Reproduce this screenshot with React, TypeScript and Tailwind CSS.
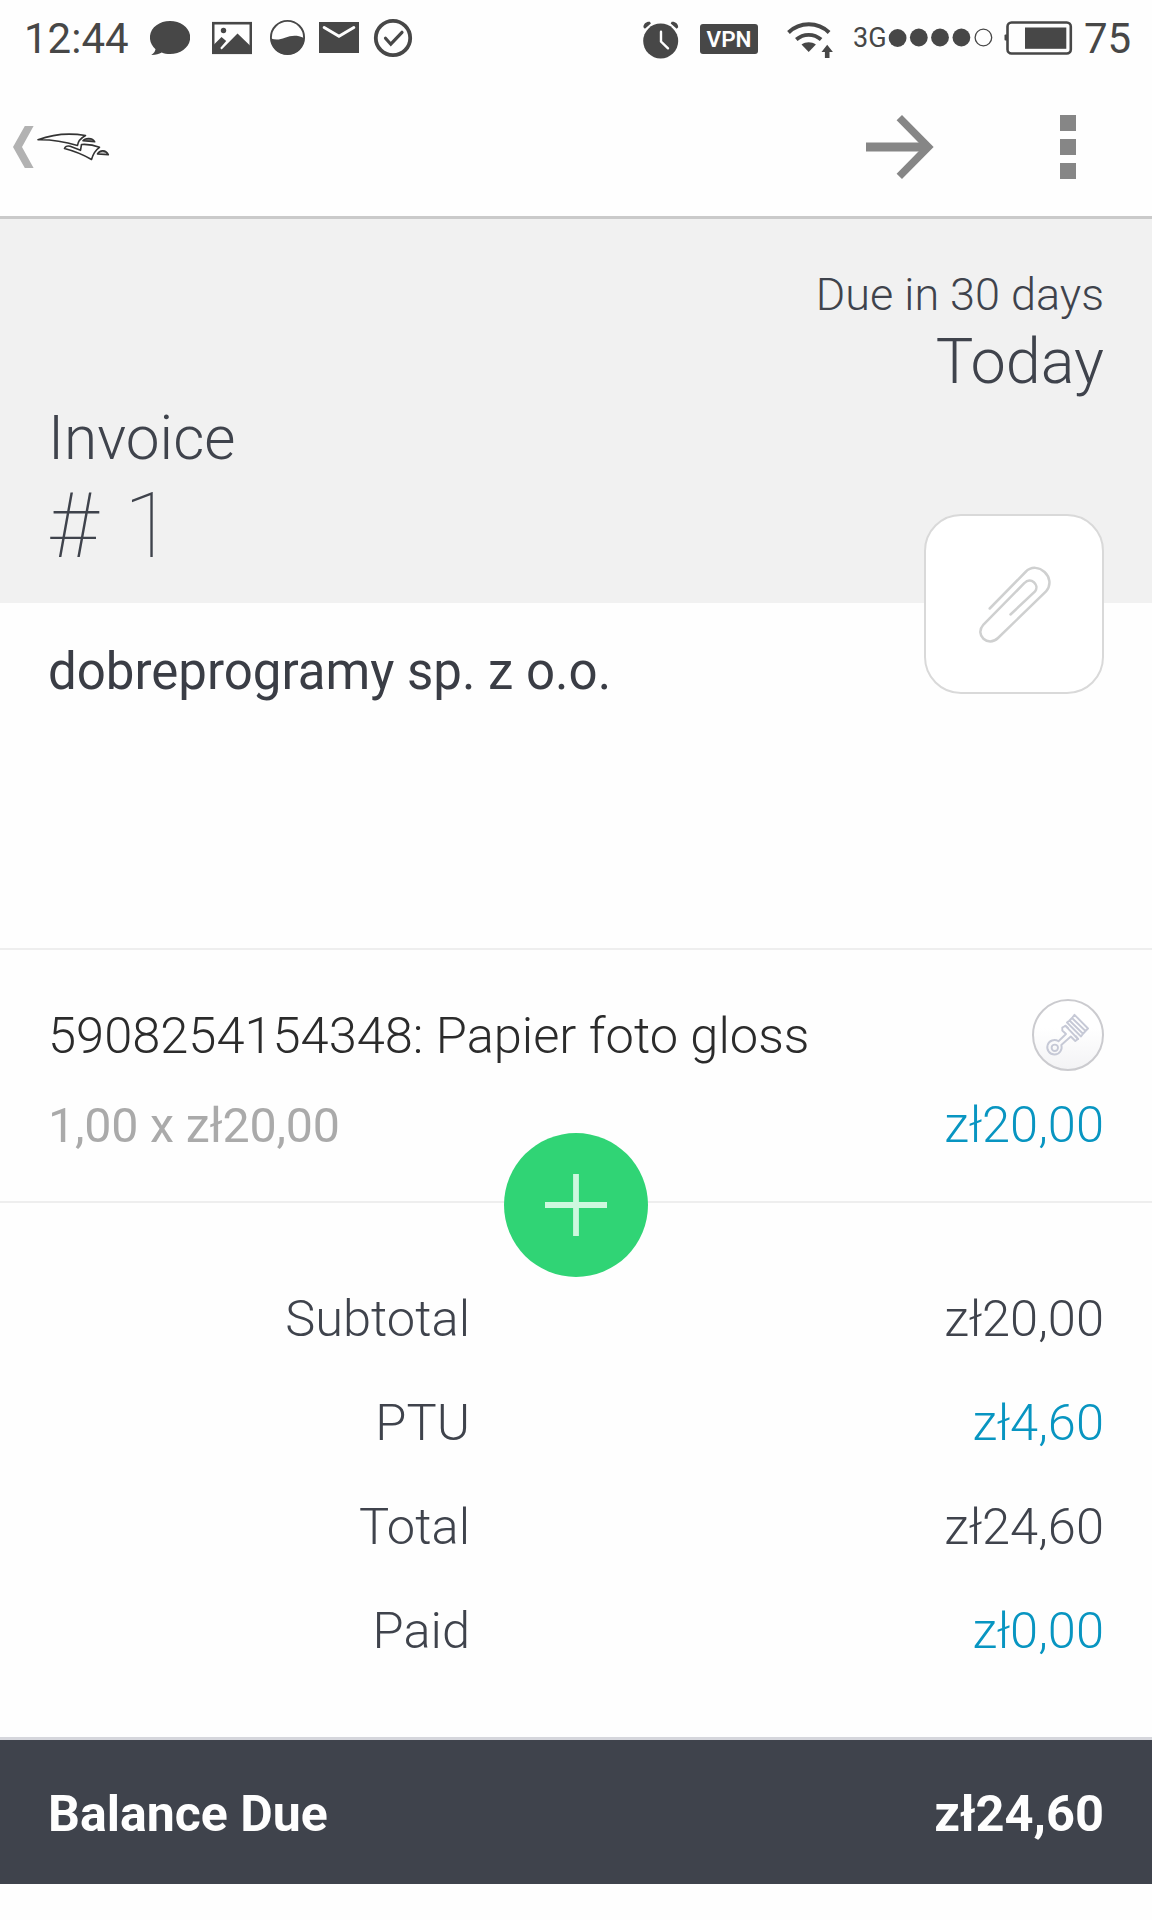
import type { ReactNode } from 'react';

const INK = '#474747';

type GlyphProps = { x: number; y?: number; w: number; h?: number; className?: string; children: ReactNode };

function Glyph({ x, y = 0, w, h = 76, className = '', children }: GlyphProps) {
  return (
    <svg width={w} height={h} viewBox={`${x} ${y} ${w} ${h}`} fill="none" className={`block shrink-0 ${className}`}>
      {children}
    </svg>
  );
}

function StatusBar() {
  return (
    <div className="flex h-[76px] items-center justify-between pl-[24px] pr-[19px] text-[#474747]">
      <div className="flex items-center">
        <span className="mt-[2px] w-[126px] text-[42px] leading-[76px]">12:44</span>
        <Glyph x={150} w={40}>
          <path d="M170 21c11.2 0 20.2 7.2 20.2 16.3S181.200 54 170 54c-3 0-5.800-.5-8.300-1.500-2.800 1.700-6.200 2.500-10.400 2.400 2.300-1.500 3.800-3.400 4.200-5.700-3.500-3-5.600-7.200-5.600-11.900C149.900 28.200 158.900 21 170 21z" fill={INK} />
        </Glyph>
        <Glyph x={212} w={40} className="ml-[22px]">
          <rect x="213.200" y="23.200" width="37.600" height="29.600" stroke={INK} strokeWidth="2.600" />
          <circle cx="223.500" cy="30.500" r="2.700" fill={INK} />
          <path d="M213 45.500l8.500-8.500 4.700 4-6 7 1.500 1.500L237.500 33.500 251 46.500V53H213z" fill={INK} />
        </Glyph>
        <Glyph x={269} w={37} className="ml-[17px]">
          <circle cx="287.500" cy="37.500" r="16.600" stroke={INK} strokeWidth="1.900" />
          <path d="M271 38.500c4.500 1.800 9 1.300 14-.7 6-2.200 11.500-3.200 19 .2 0 9.500-7 16.500-16.500 16.500S271 47.500 271 38.500z" fill={INK} />
        </Glyph>
        <Glyph x={319} w={40} className="ml-[13px]">
          <rect x="319" y="22" width="40" height="31" fill={INK} />
          <path d="M324.200 27.500L339 36.300l14.800-8.800" stroke="#fefefe" strokeWidth="3" strokeLinecap="round" />
        </Glyph>
        <Glyph x={373} w={40} className="ml-[14px]">
          <circle cx="393" cy="38" r="17.200" stroke={INK} strokeWidth="3.800" />
          <path d="M385.500 38.200l5.300 6L402 32.300" stroke={INK} strokeWidth="3.200" strokeLinecap="round" />
        </Glyph>
      </div>
      <div className="flex items-center">
        <Glyph x={643} w={36}>
          <circle cx="660.700" cy="41" r="17.500" fill={INK} />
          <path d="M643.400 27.300c0-3.600 2.800-6 6.500-5.600l1 1.800-6 5.300zM678.200 27.300c0-3.600-2.800-6-6.500-5.600l-1 1.800 6 5.300z" fill={INK} />
          <path d="M661 31.800v9.700l7 6.800" stroke="#fefefe" strokeWidth="2.400" strokeLinecap="round" />
        </Glyph>
        <div className="ml-[21px] mt-[2px] flex h-[30px] w-[58px] items-center justify-center rounded-[3px] bg-[#474747] text-[22.5px] font-semibold leading-[30px] text-[#fefefe]">
          VPN
        </div>
        <Glyph x={787} w={46} className="ml-[29px]">
          <path d="M788.500 32.500c11.400-10.900 29.200-10.900 40.600 0" stroke={INK} strokeWidth="4" />
          <path d="M796.300 39.500c7.100-6.300 17.600-6.300 24.800 0" stroke={INK} strokeWidth="3.800" />
          <path d="M801.500 44.500c4.300-3 10-3 14.400 0L808.700 52z" fill={INK} />
          <path d="M827.200 44.800l5.700 7.200h-3.400v6h-4.600v-6h-3.400z" fill={INK} />
        </Glyph>
        <span className="ml-[20px] w-[35px] text-[27px] leading-[76px]">3G</span>
        <Glyph x={888} w={105}>
          <circle cx="897.600" cy="38" r="8.900" fill={INK} />
          <circle cx="918.800" cy="37.500" r="8.900" fill={INK} />
          <circle cx="940" cy="37.500" r="8.900" fill={INK} />
          <circle cx="961.400" cy="37.500" r="8.900" fill={INK} />
          <circle cx="983.400" cy="37.500" r="8.300" stroke={INK} strokeWidth="1.300" />
        </Glyph>
        <Glyph x={1004} w={69} className="ml-[11px]">
          <rect x="1007.500" y="22.500" width="63.300" height="31" rx="4" stroke={INK} strokeWidth="2.600" />
          <rect x="1025" y="27.500" width="41.300" height="21.300" fill={INK} />
          <path d="M1007 34.500h-1.500q-1 0-1 1v4q0 1 1 1h1.500z" fill={INK} />
        </Glyph>
        <span className="ml-[11px] mt-[2px] w-[49px] text-[42px] leading-[76px]">75</span>
      </div>
    </div>
  );
}

function Toolbar() {
  return (
    <div className="flex h-[143px] items-start justify-between border-b-[3px] border-[#cacaca] pl-[12px] pr-[76px]">
      <Glyph x={12} y={76} w={100} h={140}>
        <path d="M24.800 126h8.800L22 147l11.600 21h-8.800L13 147z" fill="#b2b2b2" />
        <g stroke="#333" strokeWidth="1.600" strokeLinejoin="round">
          <path d="M38 139.800C52 134.500 68 132.500 85.500 135.500c-4.500 2.500-7.500 5.500-8 10C64 141.500 52 139.500 38 139.800z" />
          <path d="M65 147.500c1-1.500 3-1.700 5.200-1.200l10.300 4L81.500 144.500c6.500-.4 12.500.6 18 2.800-4 2.700-6.500 6.700-8 12.200C83 154.500 73.500 150.800 64.500 148.500z" />
          <path d="M83 140.800c2-3 9.500-3.500 11.700 1z" fill="#777" />
          <path d="M97.500 154c2.500-4.500 8.500-4 10.800.7z" fill="#bbb" />
        </g>
      </Glyph>
      <div className="flex">
        <Glyph x={866} y={76} w={69} h={140}>
          <path d="M866 147h60" stroke="#868686" strokeWidth="9" />
          <path d="M899.300 117.700L928.300 147 899.300 176.300" stroke="#868686" strokeWidth="7.600" />
        </Glyph>
        <div className="ml-[125px] flex h-[140px] flex-col gap-[8px] pt-[39px]">
          <div className="size-4 bg-[#868686]" />
          <div className="size-4 bg-[#868686]" />
          <div className="size-4 bg-[#868686]" />
        </div>
      </div>
    </div>
  );
}

function AttachmentButton() {
  return (
    <button className="absolute right-[48px] top-[295px] size-[180px] rounded-[37px] border-2 border-[#d9d9d9] bg-white">
      <Glyph x={926} y={516} w={176} h={176}>
        <path
          d="M989.700 608.500L1025.500 572c12-12.500 32 6 20.500 19.500L998 638c-10 9.500-24-3-14.500-13.500L1024.500 583c6-6.500 15.500 1.500 10.500 8.500L1010.500 614.500"
          stroke="#cfd0d0"
          strokeWidth="2.500"
          strokeLinecap="round"
        />
      </Glyph>
    </button>
  );
}

function InvoiceHeader() {
  return (
    <div className="relative h-[384px] bg-[#f1f1f1] px-[48px] text-[#3f434c]">
      <div className="flex flex-col items-end pt-[46px] font-light">
        <div className="text-[45px] leading-[60px]">Due in 30 days</div>
        <div className="text-[63px] leading-[74px]">Today</div>
      </div>
      <div className="flex flex-col">
        <div className="text-[60.3px] font-light leading-[79px]">Invoice</div>
        <div className="text-[90px] font-thin leading-[97px] [word-spacing:5px]"># 1</div>
      </div>
      <AttachmentButton />
    </div>
  );
}

function LineItem() {
  return (
    <div className="relative h-[253px] border-b-2 border-[#eeeeee] px-[48px] pt-[47px]">
      <div className="flex h-[76px] items-center justify-between">
        <span className="pt-[2px] text-[50.6px] font-light leading-[76px] text-[#2b2b2b]">
          5908254154348: Papier foto gloss
        </span>
        <div className="size-[72px] rounded-full border-2 border-[#cbcbcf] bg-linear-to-b from-white from-40% to-[#f3f3f5]">
          <Glyph x={1034} y={1001} w={68} h={68}>
            <g stroke="#c6c9d6" strokeWidth="1.900" strokeLinejoin="round" strokeLinecap="round">
              <circle cx="1054.800" cy="1047.800" r="3.200" />
              <path d="M1058.500 1041.300L1066 1034 1062.300 1030.500V1027.500L1065.500 1025.800 1068 1028M1061.300 1045L1070.800 1036.500 1075.300 1041 1078 1039 1076 1036.300M1061.300 1045A7.200 7.200 0 1 1 1058.500 1041.300" />
              <path d="M1065.500 1025.800L1078 1039M1067 1022.500L1069.500 1020.500 1083 1033.800 1081 1036.500zM1072 1018L1074.500 1014.800 1088 1028.500 1085.500 1031zM1069.500 1020.500L1072 1018M1083 1033.800L1085.500 1031" />
            </g>
          </Glyph>
        </div>
      </div>
      <div className="mt-[14px] flex h-[76px] justify-between">
        <span className="text-[48.4px] leading-[78px] tracking-[-0.2px] text-[#aaaaaa]">1,00 x zł20,00</span>
        <span className="text-[50.6px] font-light leading-[76px] text-[#0895c1]">zł20,00</span>
      </div>
      <button className="absolute left-1/2 top-[183px] flex size-[144px] -translate-x-1/2 items-center justify-center rounded-full bg-[#30d475]">
        <svg width="62" height="62" viewBox="0 0 62 62" className="block">
          <path d="M31 0v62M0 31h62" stroke="#cdf8de" strokeWidth="5.800" />
        </svg>
      </button>
    </div>
  );
}

const totals = [
  { label: 'Subtotal', value: 'zł20,00', tone: 'text-[#3f434c]' },
  { label: 'PTU', value: 'zł4,60', tone: 'text-[#0895c1]' },
  { label: 'Total', value: 'zł24,60', tone: 'text-[#3f434c]' },
  { label: 'Paid', value: 'zł0,00', tone: 'text-[#0895c1]' },
];

export default function App() {
  return (
    <div className="flex h-[1920px] w-[1152px] flex-col overflow-hidden bg-[#fefefe] font-[Roboto,sans-serif] whitespace-nowrap">
      <StatusBar />
      <Toolbar />
      <InvoiceHeader />
      <div className="h-[347px] border-b-2 border-[#eeeeee] px-[48px] pt-[33px]">
        <div className="text-[51px] leading-[72px] text-[#3a3d45]">dobreprogramy sp. z o.o.</div>
      </div>
      <LineItem />
      <div className="flex h-[534px] flex-col px-[48px] pt-[64px]">
        {totals.map((row) => (
          <div key={row.label} className="flex h-[104px] justify-between text-[50.6px] font-light leading-[104px]">
            <span className="w-[422px] text-right text-[#3f434c]">{row.label}</span>
            <span className={row.tone}>{row.value}</span>
          </div>
        ))}
      </div>
      <div className="flex h-[147px] justify-between border-t-[3px] border-[#d5d6dc] bg-[#3f434c] px-[48px] text-[50px] font-bold leading-[148px] text-[#fefefe]">
        <span>Balance Due</span>
        <span className="text-[50.6px]">zł24,60</span>
      </div>
    </div>
  );
}
